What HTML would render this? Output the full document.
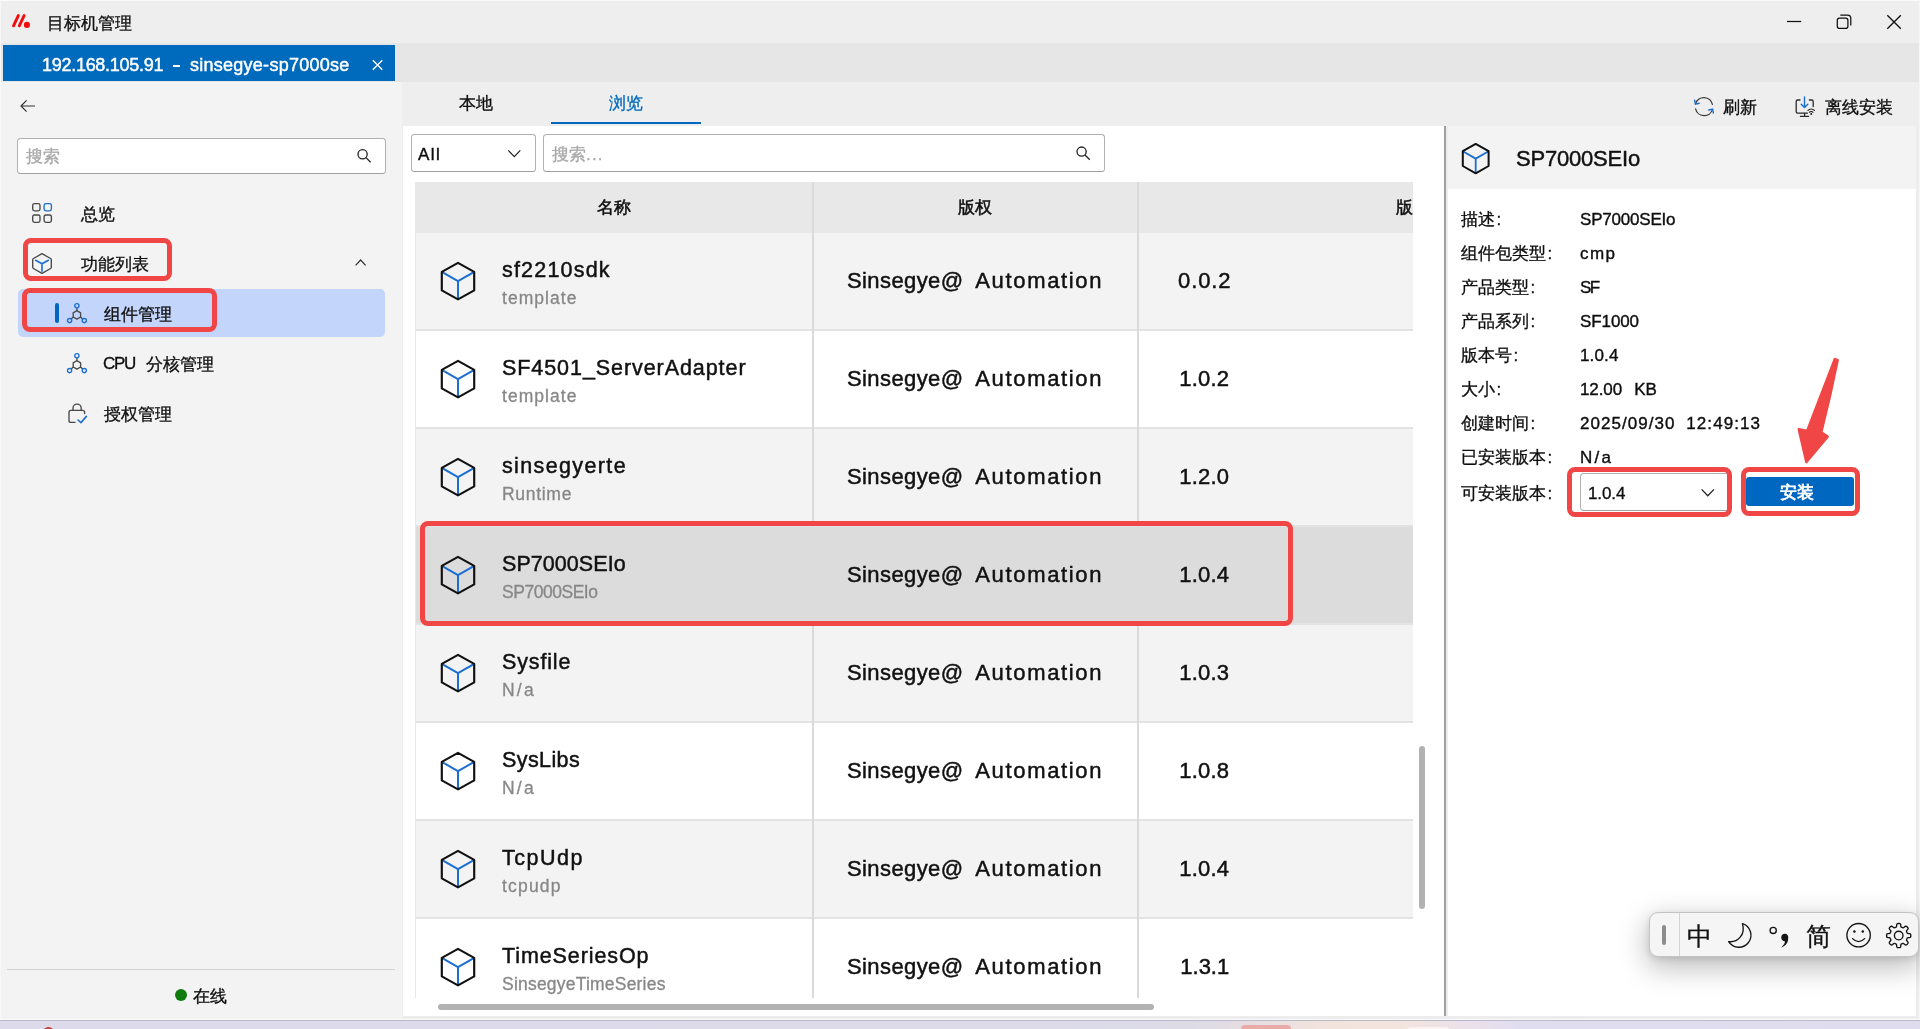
<!DOCTYPE html>
<html lang="zh">
<head>
<meta charset="utf-8">
<title>目标机管理</title>
<style>
*{box-sizing:border-box;margin:0;padding:0}
html,body{width:1920px;height:1029px;overflow:hidden}
body{position:relative;background:#fff;font-family:"Liberation Sans",sans-serif;color:#111;font-size:17px}
.abs{position:absolute}
.t{position:absolute;white-space:pre;line-height:1;font-size:17px;color:#0e0e0e;-webkit-text-stroke:0.32px currentColor}
svg{position:absolute;overflow:visible}
/* window chrome */
#titlebar{left:0;top:0;width:1920px;height:43px;background:#eeeeee;border-top:1px solid #fafafa}
#tabstrip{left:0;top:43px;width:1920px;height:39px;background:#e6e6e6}
#maintab{left:3px;top:45px;width:392px;height:36px;background:#006abd}
#sidebar{left:0;top:82px;width:401.5px;height:937px;background:#f3f3f3}
#mainhead{left:401.5px;top:82px;width:1518.5px;height:44px;background:#eeeeee}
#mainbg{left:401.5px;top:126px;width:1518.5px;height:893px;background:#ededed}
#content{left:403px;top:126px;width:1041px;height:890px;background:#fff}
#divider{left:1444px;top:126px;width:2.2px;height:890px;background:#a0a0a0}
#rpanel{left:1448px;top:126px;width:468px;height:890px;background:#fff}
#rhead{left:1448px;top:126px;width:468px;height:63px;background:#f3f3f3}
#desk{left:0;top:1019px;width:1920px;height:10px;border-top:1px solid #fbfbfb;box-shadow:inset 0 1px 0 #b9b7c9;overflow:hidden;background:linear-gradient(90deg,#dddbeb 0%,#dddbea 55%,#dcdbe6 62%,#e6dde0 65%,#f2e4dd 69%,#f3e5de 73%,#ebe1ea 76.5%,#e1ddf0 79%,#dedcee 100%)}
/* sidebar */
.inp{position:absolute;background:#fff;border:1px solid #b0b0b0;border-bottom-color:#a0a0a0;border-radius:3.5px}
.ph{color:#a8a8a8}
#navsel{left:18px;top:289px;width:367px;height:48px;background:#c4d5fb;border-radius:5px}
#navbar{left:55px;top:303px;width:4px;height:20px;background:#0067c0;border-radius:2px}
.red{position:absolute;border:5.1px solid #f04646;border-radius:8px}
/* table */
#thead{left:415px;top:182px;width:998px;height:51px;background:#e8e8e8}
.row{position:absolute;left:415px;width:998px;height:96px;background:#f3f3f3}
.row.w{background:#fff}
.row.sel{background:#dcdcdc}
.rsep{position:absolute;left:415px;width:998px;height:2px;background:#e3e3e3}
.vline{position:absolute;top:182px;width:2px;height:816px;background:#dadada}
.ti{position:absolute;left:87px;top:27px;font-size:21.5px;-webkit-text-stroke:0.48px #111;white-space:pre;line-height:1;color:#111}
.su{position:absolute;left:87px;top:57.2px;font-size:17.5px;white-space:pre;line-height:1;color:#878787;-webkit-text-stroke:0.3px #878787}
.cp{position:absolute;left:432px;top:37.4px;font-size:22px;-webkit-text-stroke:0.48px #111;white-space:pre;line-height:1;color:#111;}
.ve{-webkit-text-stroke:0.48px #111;position:absolute;left:763px;top:37.4px;width:52.5px;text-align:center;font-size:22px;white-space:pre;line-height:1;color:#111;letter-spacing:0.9px}
.cube{left:25px;top:28px}
.c1{position:absolute;left:0;top:0;letter-spacing:0.4px}.c2{position:absolute;left:128.3px;top:0;letter-spacing:1.65px}
.t,.ti,.su,.cp,.ve,.lb,.va{will-change:transform}
/* right panel */
.lb{position:absolute;left:1460.6px;font-size:17px;line-height:1;white-space:pre;color:#0e0e0e;-webkit-text-stroke:0.32px currentColor}
.lb i{font-style:normal;margin-left:1.6px}
.va{position:absolute;left:1580px;font-size:17px;line-height:1;white-space:pre;color:#0e0e0e;-webkit-text-stroke:0.38px currentColor}
</style>
</head>
<body>
<div class="abs" id="titlebar"></div>
<div class="abs" id="tabstrip"></div>
<div class="abs" id="maintab"></div>
<div class="abs" id="sidebar"></div>
<div class="abs" id="mainhead"></div>
<div class="abs" id="mainbg"></div>
<div class="abs" id="content"></div>
<div class="abs" id="rpanel"></div>
<div class="abs" id="rhead"></div>
<div class="abs" id="divider"></div>
<div class="abs" id="desk"><div class="abs" style="left:1241px;top:5px;width:50px;height:12px;border-radius:4px;background:#e9aba9"></div><div class="abs" style="left:1407px;top:6.5px;width:43px;height:12px;border-radius:4px;background:#faf3f1"></div><div class="abs" style="left:43px;top:7px;width:11px;height:11px;border-radius:6px;background:#c63a3a"></div></div>
<div class="abs" style="left:0;top:0;width:1px;height:1019px;background:#f8f8f8"></div>
<div class="abs" style="left:1919px;top:0;width:1px;height:1019px;background:#f6f6f6"></div>
<!-- logo -->
<svg style="left:0;top:0" width="60" height="43" viewBox="0 0 60 43">
 <path d="M18.3 15.6 L13.5 25.8 M24.1 15.6 L19.3 25.8" stroke="#f40b0b" stroke-width="2.9" stroke-linecap="round" fill="none"/>
 <circle cx="26.9" cy="24.9" r="3.05" fill="#f40b0b"/>
</svg>
<div class="t" style="left:46.6px;top:15px;font-size:17px;color:#111">目标机管理</div>
<!-- window controls -->
<svg style="left:1780px;top:8px" width="130" height="28" viewBox="1780 8 130 28" fill="none" stroke="#111" stroke-width="1.25">
 <path d="M1787 21.5 H1801.2"/>
 <rect x="1837.3" y="18" width="10.6" height="10.4" rx="2.2"/>
 <path d="M1840.3 15.2 H1847.6 A3.2 3.2 0 0 1 1850.8 18.4 V25.6"/>
 <path d="M1887.3 15.3 L1900.8 28.8 M1900.8 15.3 L1887.3 28.8" stroke-width="1.35"/>
</svg>
<!-- tab text -->
<div class="t" style="left:42.3px;top:55.9px;font-size:18px;color:#fff;letter-spacing:-0.28px;-webkit-text-stroke:0.45px #fff">192.168.105.91</div><div class="abs" style="left:172.8px;top:65.1px;width:6.8px;height:1.9px;background:#fff"></div><div class="t" style="left:189.6px;top:55.9px;font-size:18px;color:#fff;letter-spacing:0.26px;-webkit-text-stroke:0.45px #fff">sinsegye-sp7000se</div>
<svg style="left:370px;top:58px" width="16" height="16" viewBox="370 58 16 16"><path d="M372.8 60.2 L382.3 69.7 M382.3 60.2 L372.8 69.7" stroke="#fff" stroke-width="1.3" fill="none"/></svg>
<!--CHROME_END-->
<!-- back arrow -->
<svg style="left:18px;top:96px" width="22" height="20" viewBox="18 96 22 20"><path d="M35 106 H21.2 M26.6 100.4 L21 106 L26.6 111.6" stroke="#333" stroke-width="1.2" fill="none" stroke-linejoin="round"/></svg>
<!-- search -->
<div class="inp" style="left:17px;top:138px;width:369px;height:36px"></div>
<div class="t ph" style="left:26px;top:148px;font-size:17px">搜索</div>
<svg style="left:355px;top:147px" width="18" height="18" viewBox="355 147 18 18" fill="none" stroke="#222" stroke-width="1.3"><circle cx="362.6" cy="154.2" r="4.6"/><path d="M366 157.6 L370.6 162.2"/></svg>
<!-- nav: overview -->
<svg style="left:30px;top:201px" width="24" height="24" viewBox="30 201 24 24" fill="none" stroke="#484848" stroke-width="1.35">
 <rect x="32.7" y="203.6" width="7.3" height="7.3" rx="1.8"/>
 <rect x="44.1" y="203.6" width="7.3" height="7.3" rx="1.8" stroke="#1a6fd0"/>
 <rect x="32.7" y="215" width="7.3" height="7.3" rx="1.8"/>
 <rect x="44.1" y="215" width="7.3" height="7.3" rx="1.8"/>
</svg>
<div class="t" style="left:81px;top:205.5px">总览</div>
<!-- nav: function list -->
<svg style="left:30px;top:251px" width="24" height="24" viewBox="30 251 24 24" fill="none" stroke-linejoin="round" stroke-linecap="round">
 <path d="M42 253.7 L50.6 258.5 Q51.3 258.9 51.3 259.7 V267.3 Q51.3 268.1 50.6 268.5 L42 273.3 L33.4 268.5 Q32.7 268.1 32.7 267.3 V259.7 Q32.7 258.9 33.4 258.5 Z" stroke="#484848" stroke-width="1.35"/>
 <path d="M35.6 260.3 L42 263.8 L48.4 260.3 M42 263.8 V271.3" stroke="#1a6fd0" stroke-width="1.6"/>
</svg>
<div class="t" style="left:81px;top:255.5px">功能列表</div>
<svg style="left:352px;top:256px" width="16" height="12" viewBox="352 256 16 12"><path d="M355.6 265.4 L360.6 260 L365.6 265.4" stroke="#333" stroke-width="1.2" fill="none"/></svg>
<!-- nav: selected -->
<div class="abs" id="navsel"></div>
<div class="abs" id="navbar"></div>
<svg style="left:64px;top:300px" width="26" height="26" viewBox="64 300 26 26" fill="none" stroke-width="1.35">
 <g>
 <path d="M76.9 310.7 L80.6 312.8 V317 L76.9 319.1 L73.2 317 V312.8 Z M76.9 310.7 V307.9 M73.2 317 L71.2 319 M80.6 317 L82.6 319" stroke="#4a4a4a" stroke-linejoin="round"/>
 <circle cx="76.9" cy="305.7" r="2.1" stroke="#1a6fd0"/>
 <circle cx="69.6" cy="320.6" r="2.1" stroke="#1a6fd0"/>
 <circle cx="84.3" cy="320.6" r="2.1" stroke="#1a6fd0"/>
 </g>
</svg>
<div class="t" style="left:104px;top:305.5px">组件管理</div>
<!-- nav: cpu -->
<svg style="left:64px;top:350px" width="26" height="26" viewBox="64 300 26 26" fill="none" stroke-width="1.35"><path d="M76.9 310.7 L80.6 312.8 V317 L76.9 319.1 L73.2 317 V312.8 Z M76.9 310.7 V307.9 M73.2 317 L71.2 319 M80.6 317 L82.6 319" stroke="#4a4a4a" stroke-linejoin="round"/>
 <circle cx="76.9" cy="305.7" r="2.1" stroke="#1a6fd0"/>
 <circle cx="69.6" cy="320.6" r="2.1" stroke="#1a6fd0"/>
 <circle cx="84.3" cy="320.6" r="2.1" stroke="#1a6fd0"/></svg>
<div class="t" style="left:103px;top:355.4px;letter-spacing:-1.3px">CPU</div>
<div class="t" style="left:145.6px;top:355.5px">分核管理</div>
<!-- nav: license -->
<svg style="left:64px;top:400px" width="26" height="26" viewBox="64 400 26 26" fill="none" stroke-width="1.35" stroke-linecap="round" stroke-linejoin="round">
 <path d="M75 422.4 H71 Q69 422.4 69 420.4 V412.4 Q69 410.4 71 410.4 H82.6 Q84.6 410.4 84.6 412.4 V413.6" stroke="#4a4a4a"/>
 <path d="M73 410.2 V408.2 A4.1 4.1 0 0 1 81.2 408.2 V410.2" stroke="#4a4a4a"/>
 <path d="M78 420 L81 422.6 L86.4 416.4" stroke="#1a6fd0" stroke-width="1.6"/>
</svg>
<div class="t" style="left:104px;top:405.5px">授权管理</div>
<!-- bottom -->
<div class="abs" style="left:7px;top:969px;width:388px;height:1px;background:#d2d2d2"></div>
<div class="abs" style="left:175px;top:989px;width:12px;height:12px;border-radius:6px;background:#107c10"></div>
<div class="t" style="left:193px;top:987.5px">在线</div>
<!--SIDEBAR_END-->
<!-- tabs -->
<div class="t" style="left:459px;top:95px">本地</div>
<div class="t" style="left:609px;top:95px;color:#006abd">浏览</div>
<div class="abs" style="left:551px;top:122px;width:150px;height:2.4px;background:#0067c0"></div>
<!-- refresh / offline install -->
<svg style="left:1690px;top:94px" width="28" height="26" viewBox="1690 94 28 26" fill="none" stroke-width="1.25" stroke-linecap="round">
 <path d="M1695.6 103.6 A8.7 8.7 0 0 1 1712.4 104.4" stroke="#3c3c3c"/>
 <path d="M1712.4 109.6 A8.7 8.7 0 0 1 1695.6 108.8" stroke="#3c3c3c"/>
 <path d="M1694.6 100.2 L1695.4 104.2 L1699.2 103.2" stroke="#1a6fd0" stroke-width="1.4"/>
 <path d="M1713.4 113 L1712.6 109 L1708.8 110" stroke="#1a6fd0" stroke-width="1.4"/>
</svg>
<div class="t" style="left:1723px;top:98.5px">刷新</div>
<svg style="left:1792px;top:94px" width="28" height="26" viewBox="1792 94 28 26" fill="none" stroke-width="1.3" stroke-linecap="round" stroke-linejoin="round">
 <path d="M1800 100 H1797.6 Q1796.2 100 1796.2 101.4 V111.8 Q1796.2 113.2 1797.6 113.2 H1807.4" stroke="#2a2a2a"/>
 <path d="M1809.4 100 H1811.8 Q1813.2 100 1813.2 101.4 V106.6" stroke="#2a2a2a"/>
 <path d="M1804.6 113.4 V116 M1800.4 116.3 H1808.6" stroke="#2a2a2a"/>
 <path d="M1804.5 97 V107.4 M1801.2 104.2 L1804.5 107.6 L1807.8 104.2" stroke="#1a6fd0" stroke-width="1.4"/>
 <path d="M1808 110.4 Q1811.2 107.6 1814.4 110.4 M1809.4 112.2 Q1811.2 110.8 1813 112.2" stroke="#111" stroke-width="1.2"/>
 <circle cx="1811.2" cy="114" r="0.9" fill="#111" stroke="none"/>
</svg>
<div class="t" style="left:1825px;top:98.5px">离线安装</div>
<!-- filter -->
<div class="inp" style="left:411px;top:134px;width:125px;height:38px"></div>
<div class="t" style="left:418px;top:146.2px;letter-spacing:1.5px;-webkit-text-stroke:0.4px #0e0e0e">All</div>
<svg style="left:505px;top:146px" width="18" height="14" viewBox="505 146 18 14"><path d="M508.3 150.4 L514.3 156.6 L520.3 150.4" stroke="#222" stroke-width="1.25" fill="none"/></svg>
<div class="inp" style="left:543px;top:134px;width:562px;height:38px"></div>
<div class="t ph" style="left:552px;top:145.5px">搜索<span style="letter-spacing:1.2px">...</span></div>
<svg style="left:1074px;top:144px" width="18" height="18" viewBox="1074 144 18 18" fill="none" stroke="#222" stroke-width="1.3"><circle cx="1081.6" cy="151.6" r="4.6"/><path d="M1085 155 L1089.8 159.8"/></svg>
<!--MAIN_END-->
<div class="abs" id="thead"></div>
<div class="t" style="left:597px;top:198.5px;font-weight:500;-webkit-text-stroke:0.5px #0e0e0e">名称</div>
<div class="t" style="left:958px;top:198.5px;font-weight:500;-webkit-text-stroke:0.5px #0e0e0e">版权</div>
<div class="abs" style="left:1390px;top:190px;width:23px;height:36px;overflow:hidden"><div class="t" style="left:5.6px;top:8.5px;font-weight:500;-webkit-text-stroke:0.5px #0e0e0e;letter-spacing:3px">版本</div></div>
<div class="row" style="top:233px;height:96px;overflow:hidden"><svg class="cube" width="36" height="40" viewBox="-1 -1 36 40" fill="none" stroke-linejoin="round"><path d="M0.8 9.9 L17 19.2 L33.2 9.9 M17 19.2 V37.4" stroke="#1a6fd0" stroke-width="2"/><path d="M17 0.9 L33.2 9.9 V28.4 L17 37.4 L0.8 28.4 V9.9 Z" stroke="#111" stroke-width="2.15"/></svg><div class="ti" style="letter-spacing:1.19px">sf2210sdk</div><div class="su" style="letter-spacing:1.05px">template</div><div class="cp"><span class="c1">Sinsegye@</span><span class="c2">Automation</span></div><div class="ve">0.0.2</div></div>
<div class="rsep" style="top:329px"></div>
<div class="row w" style="top:331px;height:96px;overflow:hidden"><svg class="cube" width="36" height="40" viewBox="-1 -1 36 40" fill="none" stroke-linejoin="round"><path d="M0.8 9.9 L17 19.2 L33.2 9.9 M17 19.2 V37.4" stroke="#1a6fd0" stroke-width="2"/><path d="M17 0.9 L33.2 9.9 V28.4 L17 37.4 L0.8 28.4 V9.9 Z" stroke="#111" stroke-width="2.15"/></svg><div class="ti" style="letter-spacing:0.93px">SF4501_ServerAdapter</div><div class="su" style="letter-spacing:1.05px">template</div><div class="cp"><span class="c1">Sinsegye@</span><span class="c2">Automation</span></div><div class="ve" style="letter-spacing:0.25px">1.0.2</div></div>
<div class="rsep" style="top:427px"></div>
<div class="row" style="top:429px;height:96px;overflow:hidden"><svg class="cube" width="36" height="40" viewBox="-1 -1 36 40" fill="none" stroke-linejoin="round"><path d="M0.8 9.9 L17 19.2 L33.2 9.9 M17 19.2 V37.4" stroke="#1a6fd0" stroke-width="2"/><path d="M17 0.9 L33.2 9.9 V28.4 L17 37.4 L0.8 28.4 V9.9 Z" stroke="#111" stroke-width="2.15"/></svg><div class="ti" style="letter-spacing:1.37px">sinsegyerte</div><div class="su" style="letter-spacing:0.7px">Runtime</div><div class="cp"><span class="c1">Sinsegye@</span><span class="c2">Automation</span></div><div class="ve" style="letter-spacing:0.25px">1.2.0</div></div>
<div class="rsep" style="top:525px"></div>
<div class="row sel" style="top:527px;height:96px;overflow:hidden"><svg class="cube" width="36" height="40" viewBox="-1 -1 36 40" fill="none" stroke-linejoin="round"><path d="M0.8 9.9 L17 19.2 L33.2 9.9 M17 19.2 V37.4" stroke="#1a6fd0" stroke-width="2"/><path d="M17 0.9 L33.2 9.9 V28.4 L17 37.4 L0.8 28.4 V9.9 Z" stroke="#111" stroke-width="2.15"/></svg><div class="ti" style="letter-spacing:0.06px">SP7000SEIo</div><div class="su" style="letter-spacing:-0.47px">SP7000SEIo</div><div class="cp"><span class="c1">Sinsegye@</span><span class="c2">Automation</span></div><div class="ve" style="letter-spacing:0.25px">1.0.4</div></div>
<div class="rsep" style="top:623px"></div>
<div class="row" style="top:625px;height:96px;overflow:hidden"><svg class="cube" width="36" height="40" viewBox="-1 -1 36 40" fill="none" stroke-linejoin="round"><path d="M0.8 9.9 L17 19.2 L33.2 9.9 M17 19.2 V37.4" stroke="#1a6fd0" stroke-width="2"/><path d="M17 0.9 L33.2 9.9 V28.4 L17 37.4 L0.8 28.4 V9.9 Z" stroke="#111" stroke-width="2.15"/></svg><div class="ti" style="letter-spacing:0.85px">Sysfile</div><div class="su" style="letter-spacing:2.2px">N/a</div><div class="cp"><span class="c1">Sinsegye@</span><span class="c2">Automation</span></div><div class="ve" style="letter-spacing:0.25px">1.0.3</div></div>
<div class="rsep" style="top:721px"></div>
<div class="row w" style="top:723px;height:96px;overflow:hidden"><svg class="cube" width="36" height="40" viewBox="-1 -1 36 40" fill="none" stroke-linejoin="round"><path d="M0.8 9.9 L17 19.2 L33.2 9.9 M17 19.2 V37.4" stroke="#1a6fd0" stroke-width="2"/><path d="M17 0.9 L33.2 9.9 V28.4 L17 37.4 L0.8 28.4 V9.9 Z" stroke="#111" stroke-width="2.15"/></svg><div class="ti" style="letter-spacing:0.4px">SysLibs</div><div class="su" style="letter-spacing:2.2px">N/a</div><div class="cp"><span class="c1">Sinsegye@</span><span class="c2">Automation</span></div><div class="ve" style="letter-spacing:0.25px">1.0.8</div></div>
<div class="rsep" style="top:819px"></div>
<div class="row" style="top:821px;height:96px;overflow:hidden"><svg class="cube" width="36" height="40" viewBox="-1 -1 36 40" fill="none" stroke-linejoin="round"><path d="M0.8 9.9 L17 19.2 L33.2 9.9 M17 19.2 V37.4" stroke="#1a6fd0" stroke-width="2"/><path d="M17 0.9 L33.2 9.9 V28.4 L17 37.4 L0.8 28.4 V9.9 Z" stroke="#111" stroke-width="2.15"/></svg><div class="ti" style="letter-spacing:1.5px">TcpUdp</div><div class="su" style="letter-spacing:1.18px">tcpudp</div><div class="cp"><span class="c1">Sinsegye@</span><span class="c2">Automation</span></div><div class="ve" style="letter-spacing:0.25px">1.0.4</div></div>
<div class="rsep" style="top:917px"></div>
<div class="row w" style="top:919px;height:79px;overflow:hidden"><svg class="cube" width="36" height="40" viewBox="-1 -1 36 40" fill="none" stroke-linejoin="round"><path d="M0.8 9.9 L17 19.2 L33.2 9.9 M17 19.2 V37.4" stroke="#1a6fd0" stroke-width="2"/><path d="M17 0.9 L33.2 9.9 V28.4 L17 37.4 L0.8 28.4 V9.9 Z" stroke="#111" stroke-width="2.15"/></svg><div class="ti" style="letter-spacing:0.9px">TimeSeriesOp</div><div class="su" style="letter-spacing:0.21px">SinsegyeTimeSeries</div><div class="cp"><span class="c1">Sinsegye@</span><span class="c2">Automation</span></div><div class="ve" style="letter-spacing:0px;padding-left:1px">1.3.1</div></div>
<div class="abs" style="left:415px;top:233px;width:1px;height:765px;background:#e7e7e7"></div>
<div class="vline" style="left:812px"></div>
<div class="vline" style="left:1137px"></div>
<div class="abs" style="left:812px;top:527px;width:2px;height:96px;background:#dcdcdc"></div>
<div class="abs" style="left:1137px;top:527px;width:2px;height:96px;background:#dcdcdc"></div>
<div class="abs" style="left:438px;top:1004px;width:716px;height:6px;border-radius:3px;background:#b2b2b2"></div>
<div class="abs" style="left:1419px;top:746px;width:6px;height:163px;border-radius:3px;background:#b2b2b2"></div>
<!--TABLE_END-->
<svg style="left:1461px;top:142px" width="30" height="34" viewBox="-1 -1 30 34" fill="none" stroke-linejoin="round"><path d="M0.8 8.2 L13.7 15.6 L26.6 8.2 M13.7 15.6 V30.3" stroke="#1a6fd0" stroke-width="1.8"/><path d="M13.7 0.9 L26.6 8.2 V23 L13.7 30.3 L0.8 23 V8.2 Z" stroke="#111" stroke-width="2"/></svg>
<div class="t" style="left:1516px;top:148.2px;font-size:22px;letter-spacing:-0.2px;color:#111;-webkit-text-stroke:0.45px #111">SP7000SEIo</div>
<div class="lb" style="top:210.5px">描述<i>:</i></div>
<div class="va" style="top:211.1px;letter-spacing:-0.2px;word-spacing:0px">SP7000SEIo</div>
<div class="lb" style="top:244.5px">组件包类型<i>:</i></div>
<div class="va" style="top:245.1px;letter-spacing:1.4px;word-spacing:0px">cmp</div>
<div class="lb" style="top:278.5px">产品类型<i>:</i></div>
<div class="va" style="top:279.1px;letter-spacing:-1.6px;word-spacing:0px">SF</div>
<div class="lb" style="top:312.5px">产品系列<i>:</i></div>
<div class="va" style="top:313.1px;letter-spacing:-0.1px;word-spacing:0px">SF1000</div>
<div class="lb" style="top:346.5px">版本号<i>:</i></div>
<div class="va" style="top:347.1px;letter-spacing:0.15px;word-spacing:0px">1.0.4</div>
<div class="lb" style="top:380.5px">大小<i>:</i></div>
<div class="va" style="top:381.1px;letter-spacing:-0.1px;word-spacing:7.5px">12.00 KB</div>
<div class="lb" style="top:414.5px">创建时间<i>:</i></div>
<div class="va" style="top:415.1px;letter-spacing:1.05px;word-spacing:5px">2025/09/30 12:49:13</div>
<div class="lb" style="top:448.5px">已安装版本<i>:</i></div>
<div class="va" style="top:449.1px;letter-spacing:2.2px;word-spacing:0px">N/a</div>
<div class="lb" style="top:484.5px">可安装版本<i>:</i></div>
<div class="inp" style="left:1580px;top:473px;width:147px;height:38px;border-radius:4px 0 0 4px;border-right:none"></div>
<div class="t" style="left:1588px;top:484.6px;letter-spacing:-0.1px">1.0.4</div>
<svg style="left:1698px;top:485px" width="20" height="14" viewBox="1698 485 20 14"><path d="M1701.6 489.4 L1707.8 495.8 L1714 489.4" stroke="#222" stroke-width="1.25" fill="none"/></svg>
<div class="abs" style="left:1746px;top:477px;width:108px;height:29px;background:#0067c0;border-radius:3px"></div>
<div class="t" style="left:1780px;top:484px;color:#fff;-webkit-text-stroke:0.75px #fff">安装</div>
<!--RIGHT_END-->
<!-- red annotation boxes -->
<div class="red" style="left:22.5px;top:237.5px;width:149.5px;height:43.5px"></div>
<div class="red" style="left:21.8px;top:287.6px;width:195.4px;height:44.8px"></div>
<div class="red" style="left:420px;top:521.4px;width:872.6px;height:105px"></div>
<div class="red" style="left:1567.2px;top:467.3px;width:165px;height:49.8px"></div>
<div class="red" style="left:1741.2px;top:467.3px;width:118.8px;height:48.5px"></div>
<svg style="left:1790px;top:350px" width="60" height="120" viewBox="1790 350 60 120"><path d="M1834.8 359.2 L1837.6 360.2 Q1830.4 396 1821.2 432.4 L1827.6 436.6 L1806.4 462 L1798.8 429.2 L1807.2 431 Z" fill="#f04646" stroke="#f04646" stroke-width="2.6" stroke-linejoin="round"/></svg>
<!-- IME toolbar -->
<div class="abs" style="left:1649px;top:912px;width:269.5px;height:44.5px;border-radius:9px;background:#f5f5f5;border:1px solid #c4c4c4;box-shadow:0 9px 28px 2px rgba(0,0,0,0.26),0 2px 6px rgba(0,0,0,0.10)"></div>
<div class="abs" style="left:1679px;top:913px;width:1px;height:42.5px;background:#d4d4d4"></div>
<div class="abs" style="left:1662px;top:925px;width:4px;height:20px;border-radius:2px;background:#8c8c8c"></div>
<div class="t" style="left:1686.6px;top:924px;font-size:25px;font-weight:300;color:#111">中</div>
<div class="t" style="left:1806.2px;top:924px;font-size:25px;font-weight:300;color:#111">简</div>
<svg style="left:1724px;top:918px" width="192" height="34" viewBox="1724 918 192 34" fill="none" stroke="#151515" stroke-width="1.35" stroke-linecap="round" stroke-linejoin="round">
 <!-- moon -->
 <path d="M1742.4 923.6 A12.1 12.1 0 1 1 1728.6 941.6 C1737.5 942.8 1746 934.5 1742.4 923.6 Z"/>
 <!-- punctuation -->
 <circle cx="1773.2" cy="930.4" r="3.1"/>
 <path d="M1781.3 937.3 A3.5 3.5 0 1 1 1788.1 938.4 C1788.4 942.6 1785.4 946 1781.2 947.4 C1784 945 1785.2 942.8 1784.8 941.3 A3.5 3.5 0 0 1 1781.3 937.3 Z" fill="#151515" stroke="none"/>
 <!-- smile -->
 <circle cx="1858.6" cy="935.2" r="11.7"/>
 <circle cx="1854.4" cy="931.6" r="1.25" fill="#151515" stroke="none"/>
 <circle cx="1862.8" cy="931.6" r="1.25" fill="#151515" stroke="none"/>
 <path d="M1852.6 938.6 Q1858.6 944.8 1864.6 938.6"/>
 <!-- gear -->
 <g transform="translate(1898.7 935.6)"><circle r="4.3"/><path d="M0.00 -12.10 L0.32 -12.09 L0.63 -12.07 L0.95 -12.03 L1.26 -11.95 L1.55 -11.79 L1.81 -11.42 L1.99 -10.71 L2.08 -9.79 L2.18 -9.08 L2.33 -8.71 L2.52 -8.52 L2.73 -8.40 L2.94 -8.30 L3.15 -8.22 L3.37 -8.13 L3.58 -8.04 L3.79 -7.95 L4.01 -7.87 L4.24 -7.81 L4.51 -7.80 L4.88 -7.96 L5.45 -8.39 L6.17 -8.98 L6.80 -9.35 L7.24 -9.43 L7.56 -9.34 L7.84 -9.18 L8.09 -8.98 L8.33 -8.78 L8.56 -8.56 L8.78 -8.33 L8.98 -8.09 L9.18 -7.84 L9.34 -7.56 L9.43 -7.24 L9.35 -6.80 L8.98 -6.17 L8.39 -5.45 L7.96 -4.88 L7.80 -4.51 L7.81 -4.24 L7.87 -4.01 L7.95 -3.79 L8.04 -3.58 L8.13 -3.37 L8.22 -3.15 L8.30 -2.94 L8.40 -2.73 L8.52 -2.52 L8.71 -2.33 L9.08 -2.18 L9.79 -2.08 L10.71 -1.99 L11.42 -1.81 L11.79 -1.55 L11.95 -1.26 L12.03 -0.95 L12.07 -0.63 L12.09 -0.32 L12.10 -0.00 L12.09 0.32 L12.07 0.63 L12.03 0.95 L11.95 1.26 L11.79 1.55 L11.42 1.81 L10.71 1.99 L9.79 2.08 L9.08 2.18 L8.71 2.33 L8.52 2.52 L8.40 2.73 L8.30 2.94 L8.22 3.15 L8.13 3.37 L8.04 3.58 L7.95 3.79 L7.87 4.01 L7.81 4.24 L7.80 4.51 L7.96 4.88 L8.39 5.45 L8.98 6.17 L9.35 6.80 L9.43 7.24 L9.34 7.56 L9.18 7.84 L8.98 8.09 L8.78 8.33 L8.56 8.56 L8.33 8.78 L8.09 8.98 L7.84 9.18 L7.56 9.34 L7.24 9.43 L6.80 9.35 L6.17 8.98 L5.45 8.39 L4.88 7.96 L4.51 7.80 L4.24 7.81 L4.01 7.87 L3.79 7.95 L3.58 8.04 L3.37 8.13 L3.15 8.22 L2.94 8.30 L2.73 8.40 L2.52 8.52 L2.33 8.71 L2.18 9.08 L2.08 9.79 L1.99 10.71 L1.81 11.42 L1.55 11.79 L1.26 11.95 L0.95 12.03 L0.63 12.07 L0.32 12.09 L0.00 12.10 L-0.32 12.09 L-0.63 12.07 L-0.95 12.03 L-1.26 11.95 L-1.55 11.79 L-1.81 11.42 L-1.99 10.71 L-2.08 9.79 L-2.18 9.08 L-2.33 8.71 L-2.52 8.52 L-2.73 8.40 L-2.94 8.30 L-3.15 8.22 L-3.37 8.13 L-3.58 8.04 L-3.79 7.95 L-4.01 7.87 L-4.24 7.81 L-4.51 7.80 L-4.88 7.96 L-5.45 8.39 L-6.17 8.98 L-6.80 9.35 L-7.24 9.43 L-7.56 9.34 L-7.84 9.18 L-8.09 8.98 L-8.33 8.78 L-8.56 8.56 L-8.78 8.33 L-8.98 8.09 L-9.18 7.84 L-9.34 7.56 L-9.43 7.24 L-9.35 6.80 L-8.98 6.17 L-8.39 5.45 L-7.96 4.88 L-7.80 4.51 L-7.81 4.24 L-7.87 4.01 L-7.95 3.79 L-8.04 3.58 L-8.13 3.37 L-8.22 3.15 L-8.30 2.94 L-8.40 2.73 L-8.52 2.52 L-8.71 2.33 L-9.08 2.18 L-9.79 2.08 L-10.71 1.99 L-11.42 1.81 L-11.79 1.55 L-11.95 1.26 L-12.03 0.95 L-12.07 0.63 L-12.09 0.32 L-12.10 0.00 L-12.09 -0.32 L-12.07 -0.63 L-12.03 -0.95 L-11.95 -1.26 L-11.79 -1.55 L-11.42 -1.81 L-10.71 -1.99 L-9.79 -2.08 L-9.08 -2.18 L-8.71 -2.33 L-8.52 -2.52 L-8.40 -2.73 L-8.30 -2.94 L-8.22 -3.15 L-8.13 -3.37 L-8.04 -3.58 L-7.95 -3.79 L-7.87 -4.01 L-7.81 -4.24 L-7.80 -4.51 L-7.96 -4.88 L-8.39 -5.45 L-8.98 -6.17 L-9.35 -6.80 L-9.43 -7.24 L-9.34 -7.56 L-9.18 -7.84 L-8.98 -8.09 L-8.78 -8.33 L-8.56 -8.56 L-8.33 -8.78 L-8.09 -8.98 L-7.84 -9.18 L-7.56 -9.34 L-7.24 -9.43 L-6.80 -9.35 L-6.17 -8.98 L-5.45 -8.39 L-4.88 -7.96 L-4.51 -7.80 L-4.24 -7.81 L-4.01 -7.87 L-3.79 -7.95 L-3.58 -8.04 L-3.37 -8.13 L-3.15 -8.22 L-2.94 -8.30 L-2.73 -8.40 L-2.52 -8.52 L-2.33 -8.71 L-2.18 -9.08 L-2.08 -9.79 L-1.99 -10.71 L-1.81 -11.42 L-1.55 -11.79 L-1.26 -11.95 L-0.95 -12.03 L-0.63 -12.07 L-0.32 -12.09 Z"/></g>
</svg>
<!--OVERLAY_END-->
</body>
</html>
